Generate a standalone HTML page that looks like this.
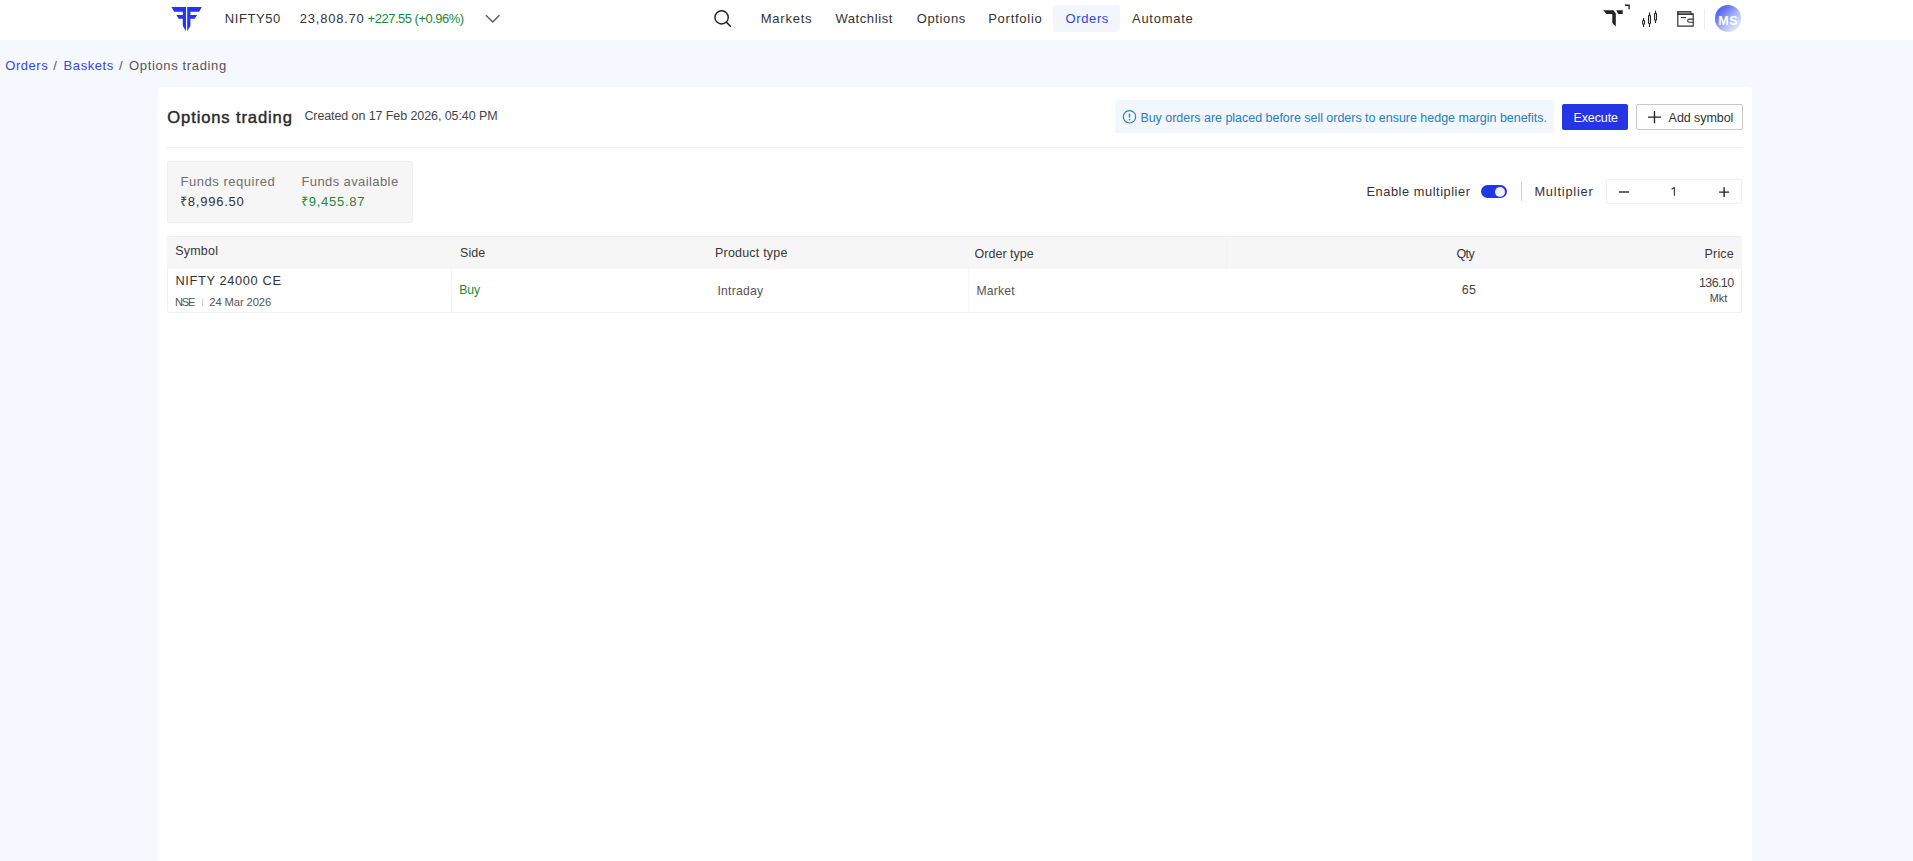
<!DOCTYPE html>
<html><head><meta charset="utf-8">
<style>
*{box-sizing:border-box;margin:0;padding:0}
html,body{width:1913px;height:861px;overflow:hidden;background:#f5f8ff;font-family:"Liberation Sans",sans-serif;color:#333}
.abs{position:absolute}
.t{position:absolute;white-space:pre}
</style></head><body>
<div class="abs" style="left:0;top:0;width:1913px;height:40px;background:#fff"></div>
<div class="abs" style="left:158.1px;top:87.1px;width:1593.6px;height:780px;background:#fff;border-radius:4px"></div>

<!-- logo -->
<svg class="abs" style="left:160px;top:0" width="60" height="40" viewBox="0 0 60 40">
  <path fill="#2435f6" d="M11.4 7 H26 V31.3 L22.8 26 V18.8 H18.6 L16.4 15.1 H22.8 V11.8 H14.2 Z"/>
  <path fill="#2435f6" d="M41.8 7 H27.2 V31.3 L30.4 26 V18.8 H34.8 L37.1 15.1 H30.4 V11.8 H39.2 Z"/>
</svg>
<div class="t" style="left:224.7px;top:11.1px;font-size:13px;line-height:16.25px;letter-spacing:0.6px;color:#333;">NIFTY50</div>
<div class="t" style="left:299.8px;top:10.9px;font-size:13px;line-height:16.25px;letter-spacing:0.762px;color:#333;">23,808.70</div>
<div class="t" style="left:367.6px;top:10.9px;font-size:13px;line-height:16.25px;letter-spacing:-0.5px;color:#17893b;">+227.55 (+0.96%)</div>
<svg class="abs" style="left:480px;top:8px" width="26" height="20" viewBox="0 0 26 20"><path d="M5.9 7.2 L12.7 14 L19.5 7.2" fill="none" stroke="#5c5c5c" stroke-width="1.4"/></svg>

<svg class="abs" style="left:706px;top:4px" width="34" height="30" viewBox="0 0 34 30"><circle cx="15.6" cy="13.4" r="6.65" fill="none" stroke="#222" stroke-width="1.45"/><path d="M20.6 18.4 L24.4 22.2" stroke="#222" stroke-width="1.5" stroke-linecap="round"/></svg>
<div class="t" style="left:760.7px;top:11.0px;font-size:13px;line-height:16.25px;letter-spacing:0.767px;color:#333;">Markets</div>
<div class="t" style="left:835.4px;top:11.0px;font-size:13px;line-height:16.25px;letter-spacing:0.588px;color:#333;">Watchlist</div>
<div class="t" style="left:916.7px;top:11.0px;font-size:13px;line-height:16.25px;letter-spacing:0.633px;color:#333;">Options</div>
<div class="t" style="left:988.2px;top:11.0px;font-size:13px;line-height:16.25px;letter-spacing:0.737px;color:#333;">Portfolio</div>
<div class="abs" style="left:1053px;top:5px;width:66.5px;height:26.7px;background:#f3f6fe;border-radius:3px"></div>
<div class="t" style="left:1065.5px;top:11.0px;font-size:13px;line-height:16.25px;letter-spacing:0.62px;color:#3545e6;">Orders</div>
<div class="t" style="left:1132.0px;top:11.0px;font-size:13px;line-height:16.25px;letter-spacing:0.729px;color:#333;">Automate</div>

<!-- right icons -->
<svg class="abs" style="left:1598px;top:0" width="40" height="32" viewBox="0 0 40 32">
  <path fill="#222" d="M5.4 10.2 H15.4 L17.8 13.6 V26.4 L14.3 23 V13.9 H8.4 Z"/>
  <path fill="#222" d="M18.2 10.2 H24.7 V13.9 H20.3 Z"/>
  <path fill="none" stroke="#222" stroke-width="1.4" d="M27 5.2 H31.1 V9.3"/>
</svg>
<svg class="abs" style="left:1636px;top:5px" width="28" height="27" viewBox="0 0 28 27">
  <g fill="none" stroke="#222" stroke-width="1.1" stroke-linecap="round">
    <rect x="6.6" y="15.5" width="1.9" height="3.8" rx="0.8"/><path d="M7.55 13.3V15.5M7.55 19.3V21.4"/>
    <rect x="12.55" y="10.4" width="1.9" height="8.2" rx="0.8"/><path d="M13.5 7.9V10.4M13.5 18.6V21.4"/>
    <rect x="18.6" y="8.3" width="1.9" height="6.9" rx="0.8"/><path d="M19.55 6V8.3M19.55 15.2V17.5"/>
  </g>
</svg>
<svg class="abs" style="left:1672px;top:5px" width="28" height="27" viewBox="0 0 28 27">
  <rect x="5.8" y="6.7" width="13.1" height="2.7" fill="#9a9a9a" stroke="#333" stroke-width="1.1"/>
  <path d="M5.8 6.7 V21.2 H21.2 V8.8 H19 M5.8 9.4 H21.2" fill="none" stroke="#333" stroke-width="1.2"/>
  <path d="M9.1 12.6 H14" stroke="#333" stroke-width="1.1"/>
  <path d="M21.2 14.1 H17.2 A1.55 1.55 0 0 0 17.2 17.2 H21.2" fill="none" stroke="#333" stroke-width="1.15"/>
</svg>
<div class="abs" style="left:1704px;top:8.5px;width:1px;height:20px;background:#ececec"></div>
<div class="abs" style="left:1714.8px;top:5px;width:26.7px;height:26.7px;border-radius:50%;background:linear-gradient(135deg,#3446f7 0%,#6a7af7 30%,#a9b4f9 55%,#d6dcfc 78%,#eceffe 100%)"></div>
<div class="t" style="left:1718.3px;top:14.2px;font-size:12.5px;line-height:15.625px;letter-spacing:0.5px;color:#fff;font-weight:bold;">MS</div>

<!-- breadcrumb -->
<div class="t" style="left:5.3px;top:57.9px;font-size:13px;line-height:16.25px;letter-spacing:0.54px;color:#3545e6;">Orders</div>
<div class="t" style="left:53.3px;top:57.9px;font-size:13px;line-height:16.25px;letter-spacing:0.0px;color:#555;">/</div>
<div class="t" style="left:63.6px;top:57.9px;font-size:13px;line-height:16.25px;letter-spacing:0.567px;color:#3545e6;">Baskets</div>
<div class="t" style="left:119.0px;top:57.9px;font-size:13px;line-height:16.25px;letter-spacing:0.0px;color:#555;">/</div>
<div class="t" style="left:129.0px;top:57.9px;font-size:13px;line-height:16.25px;letter-spacing:0.643px;color:#555;">Options trading</div>

<!-- header -->
<div class="t" style="left:167.3px;top:107.7px;font-size:16.6px;line-height:20.75px;letter-spacing:0.864px;color:#2a2a2a;-webkit-text-stroke:0.42px #2a2a2a">Options trading</div>
<div class="t" style="left:304.4px;top:109.2px;font-size:12.5px;line-height:15.625px;letter-spacing:-0.09px;color:#444;">Created on 17 Feb 2026, 05:40 PM</div>
<div class="abs" style="left:1114.8px;top:100.3px;width:439px;height:33px;background:#f2f6fd;border-radius:2px"></div>
<svg class="abs" style="left:1120px;top:107px" width="20" height="20" viewBox="0 0 20 20"><circle cx="9.5" cy="9.8" r="6.2" fill="none" stroke="#2780b9" stroke-width="1.15"/><path d="M9.5 6.6V10.6" stroke="#2780b9" stroke-width="1.3"/><circle cx="9.5" cy="12.6" r="0.8" fill="#2780b9"/></svg>
<div class="t" style="left:1140.4px;top:111.3px;font-size:12.5px;line-height:15.625px;letter-spacing:-0.028px;color:#2780b9;">Buy orders are placed before sell orders to ensure hedge margin benefits.</div>
<div class="abs" style="left:1562.3px;top:103.8px;width:65.6px;height:26.3px;background:#2535e3;border-radius:2px"></div>
<div class="t" style="left:1573.4px;top:111.2px;font-size:12.5px;line-height:15.625px;letter-spacing:-0.1px;color:#fff;">Execute</div>
<div class="abs" style="left:1636.2px;top:103.8px;width:106.8px;height:26.3px;border:1px solid #c8c8c8;border-radius:2px;background:#fff"></div>
<svg class="abs" style="left:1645px;top:108px" width="20" height="18" viewBox="0 0 20 18"><path d="M9.5 2.9V15.3M3 9.1H16" stroke="#222" stroke-width="1.35"/></svg>
<div class="t" style="left:1668.6px;top:111.2px;font-size:12.5px;line-height:15.625px;letter-spacing:-0.056px;color:#333;">Add symbol</div>
<div class="abs" style="left:167px;top:147px;width:1576px;height:1px;background:#ededed"></div>

<!-- funds -->
<div class="abs" style="left:166.8px;top:161.1px;width:246.2px;height:61.6px;background:#f6f6f6;border:1px solid #efefef;border-radius:2px"></div>
<div class="t" style="left:180.5px;top:173.9px;font-size:13px;line-height:16.25px;letter-spacing:0.531px;color:#6e6e6e;">Funds required</div>
<div class="t" style="left:180.0px;top:193.7px;font-size:13px;line-height:16.25px;letter-spacing:0.775px;color:#333;">₹8,996.50</div>
<div class="t" style="left:301.4px;top:173.9px;font-size:13px;line-height:16.25px;letter-spacing:0.407px;color:#6e6e6e;">Funds available</div>
<div class="t" style="left:301.0px;top:193.7px;font-size:13px;line-height:16.25px;letter-spacing:0.737px;color:#17893b;">₹9,455.87</div>

<!-- multiplier -->
<div class="t" style="left:1366.5px;top:184.4px;font-size:12.8px;line-height:16.0px;letter-spacing:0.55px;color:#333;">Enable multiplier</div>
<div class="abs" style="left:1481.1px;top:185.2px;width:26.3px;height:13.2px;border-radius:7px;background:#2535e3"></div>
<div class="abs" style="left:1494.9px;top:186.9px;width:10.1px;height:10.1px;border-radius:50%;background:#eef0fd"></div>
<div class="abs" style="left:1521px;top:182px;width:1px;height:19.4px;background:#cfcfcf"></div>
<div class="t" style="left:1534.4px;top:184.4px;font-size:12.8px;line-height:16.0px;letter-spacing:0.8px;color:#333;">Multiplier</div>
<div class="abs" style="left:1606.3px;top:178.9px;width:136.1px;height:25.6px;border:1px solid #eeeeee;border-radius:2px;background:#fff"></div>
<div class="abs" style="left:1619px;top:191px;width:10px;height:1.6px;background:#626262"></div>
<svg class="abs" style="left:1668px;top:185px" width="10" height="13" viewBox="0 0 10 13"><path d="M6.4 2.3 V10.7 M6.4 2.5 L3.6 4.3" fill="none" stroke="#3a3a3a" stroke-width="1.15"/></svg>
<svg class="abs" style="left:1714px;top:182px" width="20" height="20" viewBox="0 0 20 20"><path d="M10.1 5.3V15M5.1 10.1H15.1" stroke="#222" stroke-width="1.4"/></svg>

<!-- table -->
<div class="abs" style="left:166.8px;top:236.3px;width:1575.3px;height:76.3px;border:1px solid #efefef;border-radius:2px;background:#fff"></div>
<div class="abs" style="left:167.3px;top:236.8px;width:1574.3px;height:32.7px;background:#f6f6f6;border-radius:2px 2px 0 0"></div>
<div class="abs" style="left:451px;top:237px;width:1px;height:75px;background:#f5f5f5"></div>
<div class="abs" style="left:968px;top:237px;width:1px;height:75px;background:#f5f5f5"></div>
<div class="abs" style="left:1226px;top:237px;width:1px;height:32px;background:#f2f2f2"></div>
<div class="t" style="left:175.2px;top:244.4px;font-size:12.5px;line-height:15.625px;letter-spacing:0.22px;color:#383838;">Symbol</div>
<div class="t" style="left:460.0px;top:246.4px;font-size:12.5px;line-height:15.625px;letter-spacing:0.067px;color:#383838;">Side</div>
<div class="t" style="left:715.0px;top:246.4px;font-size:12.5px;line-height:15.625px;letter-spacing:0.2px;color:#383838;">Product type</div>
<div class="t" style="left:974.6px;top:246.5px;font-size:12.5px;line-height:15.625px;letter-spacing:-0.0px;color:#383838;">Order type</div>
<div class="t" style="left:1456.5px;top:246.5px;font-size:12.5px;line-height:15.625px;letter-spacing:-0.6px;color:#383838;">Qty</div>
<div class="t" style="left:1704.6px;top:246.5px;font-size:12.5px;line-height:15.625px;letter-spacing:0.15px;color:#383838;">Price</div>
<div class="t" style="left:175.4px;top:273.1px;font-size:12.8px;line-height:16.0px;letter-spacing:0.646px;color:#333;">NIFTY 24000 CE</div>
<div class="t" style="left:174.9px;top:295.1px;font-size:11.2px;line-height:14.0px;letter-spacing:-1.2px;color:#555;">NSE</div>
<div class="abs" style="left:202px;top:298.7px;width:1px;height:7px;background:#cfcfcf"></div>
<div class="t" style="left:209.3px;top:295.1px;font-size:11.2px;line-height:14.0px;letter-spacing:-0.1px;color:#555;">24 Mar 2026</div>
<div class="t" style="left:459.3px;top:283.1px;font-size:12.2px;line-height:15.25px;letter-spacing:-0.1px;color:#17893b;">Buy</div>
<div class="t" style="left:717.5px;top:283.5px;font-size:12.2px;line-height:15.25px;letter-spacing:0.214px;color:#555;">Intraday</div>
<div class="t" style="left:976.4px;top:283.7px;font-size:12.2px;line-height:15.25px;letter-spacing:0.2px;color:#555;">Market</div>
<div class="t" style="left:1461.8px;top:283.4px;font-size:12.5px;line-height:15.625px;letter-spacing:0.2px;color:#444;">65</div>
<div class="t" style="left:1699.0px;top:276.1px;font-size:12.5px;line-height:15.625px;letter-spacing:-0.62px;color:#444;">136.10</div>
<div class="t" style="left:1709.7px;top:291.6px;font-size:10.8px;line-height:13.5px;letter-spacing:0.1px;color:#444;">Mkt</div>
</body></html>
